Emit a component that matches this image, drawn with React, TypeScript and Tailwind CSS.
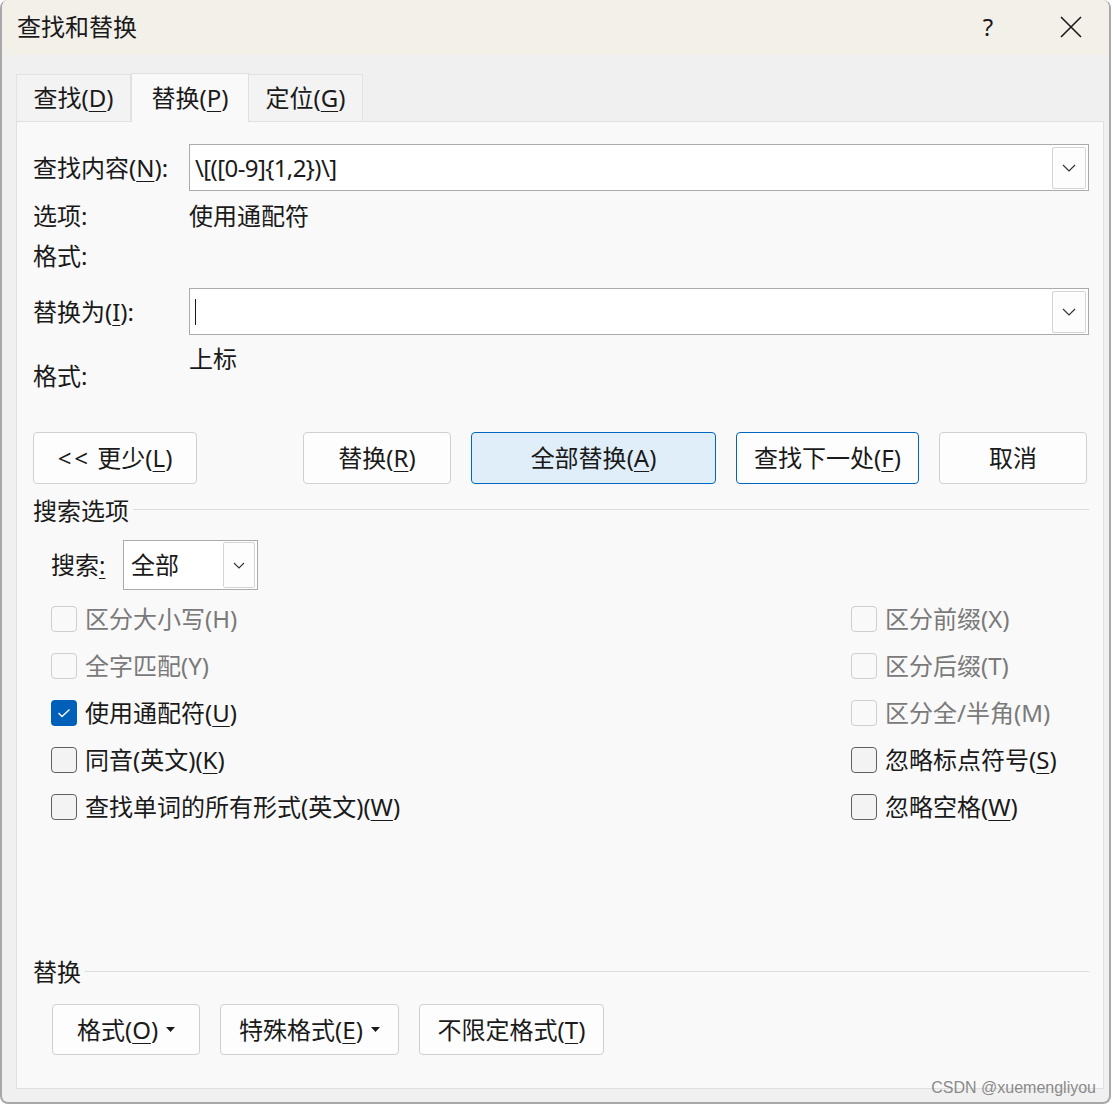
import React from 'react'

const font = { fontFamily: '"Noto Sans", "Noto Sans CJK SC", sans-serif' }

function Chevron() {
  return (
    <svg width="14" height="8" viewBox="0 0 14 8" fill="none">
      <path d="M1 1 L7 7 L13 1" stroke="#333" strokeWidth="1.2" />
    </svg>
  )
}

function Caret() {
  return (
    <svg width="9" height="5" viewBox="0 0 9 5" className="ml-[8px]">
      <path d="M0 0 H9 L4.5 5 Z" fill="#1a1a1a" />
    </svg>
  )
}

function Mn({ text, k, tail = ')' }: { text: string; k: string; tail?: string }) {
  return (
    <span>
      {text}(<u className="underline underline-offset-[4px] decoration-1">{k}</u>
      {tail}
    </span>
  )
}

function Btn({
  w,
  children,
  variant = 'default',
}: {
  w: string
  children: React.ReactNode
  variant?: 'default' | 'primary' | 'focus'
}) {
  const cls =
    variant === 'primary'
      ? 'bg-[#e0eef9] border-[#0067c0]'
      : variant === 'focus'
        ? 'bg-[#fdfdfd] border-[#0067c0]'
        : 'bg-[#fdfdfd] border-[#d0d0d0]'
  return (
    <div className={`${w} h-full flex items-center justify-center rounded-[4px] border ${cls}`}>
      {children}
    </div>
  )
}

function Check({
  label,
  state = 'off',
}: {
  label: React.ReactNode
  state?: 'off' | 'on' | 'disabled'
}) {
  return (
    <div className="h-[47px] flex items-center">
      {state === 'on' ? (
        <div className="w-[26px] h-[26px] rounded-[4px] bg-[#005fb8] flex items-center justify-center">
          <svg width="14" height="10" viewBox="0 0 14 10" fill="none">
            <path d="M1.5 5 L5 8.5 L12.5 1.5" stroke="#fff" strokeWidth="1.3" />
          </svg>
        </div>
      ) : state === 'disabled' ? (
        <div className="w-[26px] h-[26px] rounded-[4px] border border-[#cfcfcf] bg-[#f9f9f9]" />
      ) : (
        <div className="w-[26px] h-[26px] rounded-[4px] border border-[#616161] bg-[#f3f3f3]" />
      )}
      <span className={`ml-[8px] ${state === 'disabled' ? 'text-[#7a7a7a]' : 'text-[#1a1a1a]'}`}>{label}</span>
    </div>
  )
}

export default function App() {
  return (
    <div className="w-[1113px] h-[1108px] bg-white text-[24px] text-[#1a1a1a] leading-none" style={font}>
      <div className="relative w-[1111px] h-[1104px] rounded-[8px] border-x-2 border-b-2 border-[#a8a8a8] bg-[#f0f0f0] flex flex-col overflow-hidden">
        {/* Title bar */}
        <div className="h-[55px] bg-[#f3f0e9] flex items-center pl-[15px] pb-[2px] shrink-0">
          <span className="flex-1">查找和替换</span>
          <span className="w-[40px] text-center mr-[52px]">?</span>
          <svg width="22" height="22" viewBox="0 0 22 22" className="mr-[27px]">
            <path d="M1 1 L21 21 M21 1 L1 21" stroke="#1a1a1a" strokeWidth="1.6" />
          </svg>
        </div>

        <div className="flex-1 flex flex-col pl-[14px] pr-[5px]">
          {/* Tabs */}
          <div className="flex items-end h-[66px] shrink-0">
            <div className="w-[115px] h-[47px] flex items-center justify-center bg-[#f3f3f3] border border-b-0 border-[#e3e3e3]">
              <Mn text="查找" k="D" />
            </div>
            <div className="w-[118px] h-[49px] -mb-px z-10 flex items-center justify-center bg-[#f9f9f9] border border-b-0 border-[#e0e0e0]">
              <Mn text="替换" k="P" />
            </div>
            <div className="w-[114px] h-[47px] flex items-center justify-center bg-[#f3f3f3] border border-b-0 border-l-0 border-[#e3e3e3]">
              <Mn text="定位" k="G" />
            </div>
          </div>

          {/* Panel */}
          <div className="w-[1088px] h-[968px] bg-[#f9f9f9] border border-[#e0e0e0] pl-[16px] pr-[14px] flex flex-col">
            <div className="mt-[22px] h-[47px] flex items-center">
              <span className="w-[156px]">
                <Mn text="查找内容" k="N" tail="):" />
              </span>
              <div className="flex-1 h-full bg-white border border-[#ababab] flex items-center pl-[5px] pr-[2px]">
                <span className="flex-1 tracking-[-0.6px]">{'\\[([0-9]{1,2})\\]'}</span>
                <div className="w-[34px] h-[42px] border border-[#d4d4d4] rounded-[2px] bg-[#fdfdfd] flex items-center justify-center">
                  <Chevron />
                </div>
              </div>
            </div>

            <div className="mt-[5px] h-[40px] flex items-center">
              <span className="w-[156px]">选项:</span>
              <span>使用通配符</span>
            </div>
            <div className="h-[40px] flex items-center">
              <span>格式:</span>
            </div>

            <div className="mt-[12px] h-[47px] flex items-center">
              <span className="w-[156px]">
                <Mn text="替换为" k="I" tail="):" />
              </span>
              <div className="flex-1 h-full bg-white border border-[#ababab] flex items-center pl-[5px] pr-[2px]">
                <span className="flex-1 flex items-center">
                  <span className="w-px h-[26px] bg-[#1a1a1a]" />
                </span>
                <div className="w-[34px] h-[42px] border border-[#d4d4d4] rounded-[2px] bg-[#fdfdfd] flex items-center justify-center">
                  <Chevron />
                </div>
              </div>
            </div>

            <div className="h-[60px] flex items-start">
              <span className="w-[156px] mt-[26px] h-[30px] flex items-center">格式:</span>
              <span className="mt-[9px] h-[30px] flex items-center">上标</span>
            </div>

            {/* Action buttons */}
            <div className="mt-[37px] h-[52px] flex gap-[20px]">
              <div className="mr-[86px] h-full">
                <Btn w="w-[164px]">
                  <span>
                    <span className="tracking-[3px]">&lt;&lt;</span> 更少(<u className="underline underline-offset-[4px] decoration-1">L</u>)
                  </span>
                </Btn>
              </div>
              <Btn w="w-[148px]">
                <Mn text="替换" k="R" />
              </Btn>
              <Btn w="w-[245px]" variant="primary">
                <Mn text="全部替换" k="A" />
              </Btn>
              <Btn w="w-[183px]" variant="focus">
                <Mn text="查找下一处" k="F" />
              </Btn>
              <Btn w="w-[148px]">取消</Btn>
            </div>

            {/* Search options */}
            <div className="mt-[12px] h-[30px] flex items-center">
              <span>搜索选项</span>
              <div className="flex-1 h-px bg-[#dcdcdc] ml-[4px] -mt-[4px]" />
            </div>

            <div className="mt-[14px] h-[50px] flex items-center pl-[18px]">
              <span className="w-[72px]">
                搜索<u className="underline underline-offset-[4px] decoration-1">:</u>
              </span>
              <div className="w-[135px] h-full bg-white border border-[#ababab] flex items-center pl-[7px] pr-[2px]">
                <span className="flex-1">全部</span>
                <div className="w-[32px] h-[46px] border border-[#d4d4d4] rounded-[2px] bg-[#fdfdfd] flex items-center justify-center">
                  <svg width="12" height="7" viewBox="0 0 12 7" fill="none">
                    <path d="M1 1 L6 6 L11 1" stroke="#333" strokeWidth="1.1" />
                  </svg>
                </div>
              </div>
            </div>

            <div className="mt-[5px] flex pl-[18px]">
              <div className="w-[800px] flex flex-col">
                <Check label="区分大小写(H)" state="disabled" />
                <Check label="全字匹配(Y)" state="disabled" />
                <Check label={<Mn text="使用通配符" k="U" />} state="on" />
                <Check label={<Mn text="同音(英文)" k="K" />} />
                <Check label={<Mn text="查找单词的所有形式(英文)" k="W" />} />
              </div>
              <div className="flex flex-col">
                <Check label="区分前缀(X)" state="disabled" />
                <Check label="区分后缀(T)" state="disabled" />
                <Check label="区分全/半角(M)" state="disabled" />
                <Check label={<Mn text="忽略标点符号" k="S" />} />
                <Check label={<Mn text="忽略空格" k="W" />} />
              </div>
            </div>

            {/* Replace group */}
            <div className="mt-[127px] h-[30px] flex items-center">
              <span>替换</span>
              <div className="flex-1 h-px bg-[#dcdcdc] ml-[4px] -mt-[2px]" />
            </div>

            <div className="mt-[17px] h-[51px] flex gap-[20px] pl-[19px]">
              <Btn w="w-[148px]">
                <Mn text="格式" k="O" />
                <Caret />
              </Btn>
              <Btn w="w-[179px]">
                <Mn text="特殊格式" k="E" />
                <Caret />
              </Btn>
              <Btn w="w-[185px]">
                <Mn text="不限定格式" k="T" />
              </Btn>
            </div>
          </div>
        </div>

        <span className="absolute right-[13px] bottom-[6px] text-[16px] text-[#8a8a8a]" style={{ fontFamily: '"Liberation Sans", sans-serif' }}>
          CSDN @xuemengliyou
        </span>
      </div>
    </div>
  )
}
